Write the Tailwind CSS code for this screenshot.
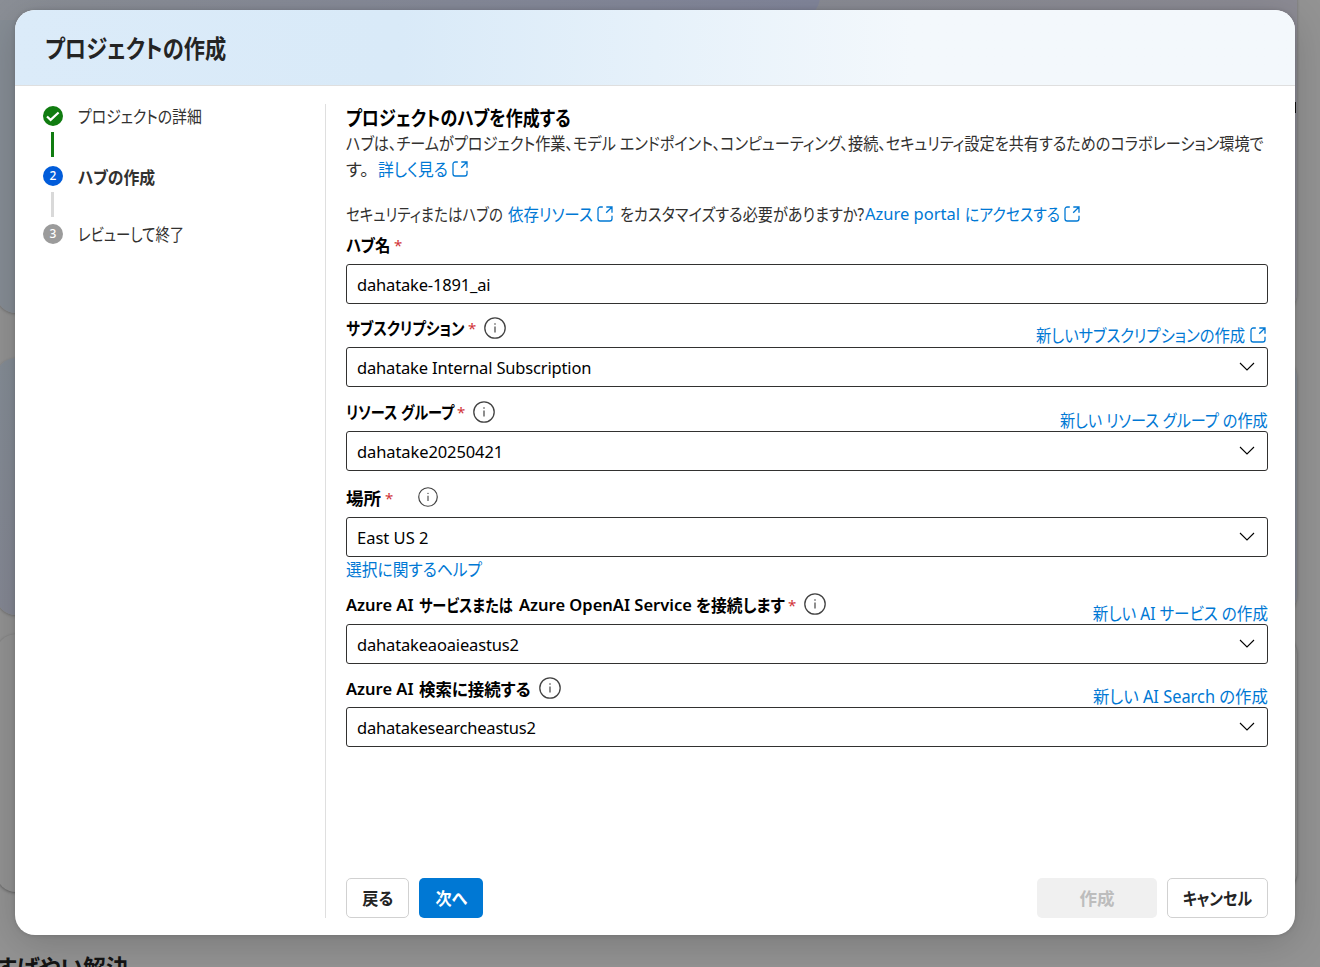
<!DOCTYPE html>
<html lang="ja">
<head>
  <meta charset="UTF-8">
  <title>プロジェクトの作成</title>
  <script src="https://cdn.jsdelivr.net/npm/@tailwindcss/browser@4"></script>
</head>
<body class="relative h-[967px] overflow-hidden bg-[#939393] font-['Noto_Sans','Noto_Sans_CJK_JP',sans-serif] [font-feature-settings:'palt'] text-[17.5px] leading-6 text-[#323130] whitespace-nowrap">
  <svg class="hidden">
    <symbol id="open" viewBox="0 0 16 16" fill="none" stroke="currentColor" stroke-width="1.3">
      <path d="M5.8 1H3.2A2.2 2.2 0 0 0 1 3.2v9.6A2.2 2.2 0 0 0 3.2 15h9.6a2.2 2.2 0 0 0 2.2-2.2v-3M9.3 1H15v5.7M15 1 9.2 6.8"/>
    </symbol>
    <symbol id="info" viewBox="0 0 22 22" fill="none" stroke="currentColor">
      <circle cx="11" cy="11" r="10.2" stroke-width="1.3"/>
      <path d="M11 9.5v6" stroke-width="1.2"/>
      <circle cx="11" cy="7" r=".8" fill="currentColor" stroke="none"/>
    </symbol>
    <symbol id="down" viewBox="0 0 16 9" fill="none" stroke="currentColor" stroke-width="1.1">
      <path d="m1 1 7 7 7-7"/>
    </symbol>
  </svg>

  <!-- página de fondo -->
  <div class="absolute -left-1 -top-5 flex w-[1301px] flex-col">
    <div class="h-[333px] overflow-hidden rounded-[20px] bg-gradient-to-r from-[#868d95] to-[#8c8b94] shadow-[0_1px_3px_rgba(0,0,0,.25)]">
      <div class="h-10 w-[824px] rounded-br-[24px] bg-gradient-to-r from-[#8b8f96] to-[#82869b]"></div>
    </div>
    <div class="mt-[45px] h-[257px] rounded-[20px] bg-gradient-to-b from-[#858d96] to-[#858894] shadow-[0_1px_3px_rgba(0,0,0,.25)]"></div>
    <div class="mt-[19px] h-[258px] rounded-[20px] bg-[#939393] shadow-[0_1px_3px_rgba(0,0,0,.35)]"></div>
    <p class="mt-[60px] text-[24px] font-bold leading-8 text-[#141414]"><span class="inline-block origin-left scale-x-[.95]">すばやい解決</span></p>
  </div>
  <div class="absolute left-[1294px] top-[102px] h-[11px] w-[2px] bg-[#111]"></div>

  <div class="absolute left-[15px] top-[10px] flex h-[925px] w-[1280px] flex-col overflow-hidden rounded-[20px] bg-white shadow-[0_8px_40px_rgba(0,0,0,.18),0_0_4px_rgba(0,0,0,.15)]">
    <header class="flex h-[76px] shrink-0 items-center border-b border-[#dfdfdf] bg-gradient-to-r from-[#dbebf9] via-[#d9eaf8] via-30% to-[#f3f8fc] to-70% pl-[30px]">
      <h1 class="text-[25px] font-bold leading-8 text-[#242424]"><span class="inline-block origin-left scale-x-[.85]">プロジェクトの作成</span></h1>
    </header>

    <div class="flex flex-1 pt-[18px] pb-[17px]">
      <!-- pasos -->
      <nav class="flex w-[311px] flex-col border-r border-[#dfdfdf] pl-7">
        <div class="flex h-[24px] items-center gap-[15px]">
          <svg class="size-5" viewBox="0 0 20 20"><circle cx="10" cy="10" r="10" fill="#107c10"/><path d="m4 10.5 3.6 3.4 8-7.4" fill="none" stroke="#fff" stroke-width="2.2"/></svg>
          <span class="origin-left scale-x-[.85]">プロジェクトの詳細</span>
        </div>
        <div class="ml-2 mt-1 h-[25px] w-[3px] bg-[#107c10]"></div>
        <div class="mt-[7px] flex h-6 items-center gap-[15px]">
          <span class="flex size-5 items-center justify-center rounded-full bg-[#015cda] text-xs font-medium text-white">2</span>
          <span class="mt-px origin-left scale-x-[.905] font-bold">ハブの作成</span>
        </div>
        <div class="ml-2 mt-1 h-[25px] w-[3px] bg-[#d9d9d9]"></div>
        <div class="mt-[5px] flex h-6 items-center gap-[15px]">
          <span class="flex size-5 items-center justify-center rounded-full bg-[#9b9b9b] text-xs font-medium text-white">3</span>
          <span class="origin-left scale-x-[.825]">レビューして終了</span>
        </div>
      </nav>

      <main class="flex w-[942px] flex-col pl-5">
        <h2 class="mt-[2px] h-[25px] text-[20px] font-bold leading-[25px] text-black"><span class="inline-block origin-left scale-x-[.852]">プロジェクトのハブを作成する</span></h2>
        <p class="h-[25px] w-[922px] leading-[25px]"><span class="inline-block origin-left scale-x-[.866]">ハブは、チームがプロジェクト作業、モデル エンドポイント、コンピューティング、接続、セキュリティ設定を共有するためのコラボレーション環境で</span></p>
        <p class="flex h-[25px] items-center">
          <span class="w-[32px]">す。</span>
          <a class="flex items-center text-[#0078d4]"><span class="w-[74px]"><span class="inline-block origin-left scale-x-[.9]">詳しく見る</span></span><svg class="size-4"><use href="#open"/></svg></a>
        </p>
        <p class="mt-5 flex h-[25px] items-center">
          <span class="w-[162px]"><span class="inline-block origin-left scale-x-[.826]">セキュリティまたはハブの</span></span>
          <a class="flex items-center text-[#0078d4]"><span class="w-[89px]"><span class="inline-block origin-left scale-x-[.885]">依存リソース</span></span><svg class="size-4"><use href="#open"/></svg></a>
          <span class="ml-[7px] w-[245px]"><span class="inline-block origin-left scale-x-[.866]">をカスタマイズする必要がありますか?</span></span>
          <a class="flex items-center text-[#0078d4]"><span class="w-[100px] text-[16.5px]">Azure portal</span><span class="w-[99px]"><span class="inline-block origin-left scale-x-[.85]">にアクセスする</span></span><svg class="size-4"><use href="#open"/></svg></a>
        </p>

        <div class="mt-[7px] flex h-[31px] text-black">
          <label class="flex h-6 items-center font-bold"><span class="w-[48px]"><span class="inline-block origin-left scale-x-[.88]">ハブ名</span></span><span class="w-2 text-[15px] font-normal text-[#d13438]">*</span></label>
        </div>
        <div class="flex h-10 w-[922px] items-center rounded-[3px] border border-[#323130] px-[10px] pt-px text-[16.5px] tracking-[-.01em] text-black">dahatake-1891_ai</div>

        <div class="flex h-[43px] w-[922px] items-end justify-between">
          <label class="mb-[7px] flex h-6 items-center font-bold text-black"><span class="w-[122px]"><span class="inline-block origin-left scale-x-[.83]">サブスクリプション</span></span><span class="w-2 text-[15px] font-normal text-[#d13438]">*</span><svg class="ml-[8px] size-[22px] text-[#424242]"><use href="#info"/></svg></label>
          <a class="flex items-center text-[#0078d4]"><span class="inline-block origin-right scale-x-[.875]">新しいサブスクリプションの作成</span><svg class="ml-[5px] mr-[2px] size-4"><use href="#open"/></svg></a>
        </div>
        <div class="flex h-10 w-[922px] items-center justify-between rounded-[3px] border border-[#323130] pl-[10px] pr-3 text-[16.5px] tracking-[-.01em] text-black"><span class="mt-[2px]">dahatake Internal Subscription</span><svg class="mb-[2px] h-[9px] w-4"><use href="#down"/></svg></div>

        <div class="flex h-[44px] w-[922px] items-end justify-between">
          <label class="mb-[7px] flex h-6 items-center font-bold text-black"><span class="w-[111px]"><span class="inline-block origin-left scale-x-[.81]">リソース グループ</span></span><span class="w-2 text-[15px] font-normal text-[#d13438]">*</span><svg class="ml-[8px] size-[22px] text-[#424242]"><use href="#info"/></svg></label>
          <a class="-mb-px origin-right scale-x-[.867] text-[#0078d4]">新しい リソース グループ の作成</a>
        </div>
        <div class="flex h-10 w-[922px] items-center justify-between rounded-[3px] border border-[#323130] pl-[10px] pr-3 text-[16.5px] tracking-[-.006em] text-black"><span class="mt-[2px]">dahatake20250421</span><svg class="mb-[2px] h-[9px] w-4"><use href="#down"/></svg></div>

        <div class="flex h-[46px] w-[922px] items-end">
          <label class="mb-[7px] flex h-6 items-center font-bold text-black"><span class="w-[39px]">場所</span><span class="w-2 text-[15px] font-normal text-[#d13438]">*</span><svg class="mb-[3px] ml-[25px] size-5 text-[#424242]"><use href="#info"/></svg></label>
        </div>
        <div class="flex h-10 w-[922px] items-center justify-between rounded-[3px] border border-[#323130] pl-[10px] pr-3 text-[16.5px] text-black"><span class="mt-px">East US 2</span><svg class="mb-[2px] h-[9px] w-4"><use href="#down"/></svg></div>
        <a class="h-6 text-[#0078d4]"><span class="inline-block origin-left scale-x-[.9]">選択に関するヘルプ</span></a>

        <div class="flex h-[43px] w-[922px] items-end justify-between">
          <label class="mb-[7px] flex h-6 items-center font-bold text-black"><span class="w-[73px] text-[16.5px] font-semibold">Azure AI</span><span class="w-[100px]"><span class="inline-block origin-left scale-x-[.81]">サービスまたは</span></span><span class="w-[177px] text-[16.5px] font-semibold">Azure OpenAI Service</span><span class="w-[92px]"><span class="inline-block origin-left scale-x-[.9]">を接続します</span></span><span class="w-2 text-[15px] font-normal text-[#d13438]">*</span><svg class="mb-[2px] ml-[8px] size-[22px] text-[#424242]"><use href="#info"/></svg></label>
          <a class="-mb-px origin-right scale-x-[.889] text-[#0078d4]">新しい AI サービス の作成</a>
        </div>
        <div class="flex h-10 w-[922px] items-center justify-between rounded-[3px] border border-[#323130] pl-[10px] pr-3 text-[16.5px] tracking-[-.01em] text-black"><span class="mt-px">dahatakeaoaieastus2</span><svg class="mb-[2px] h-[9px] w-4"><use href="#down"/></svg></div>

        <div class="flex h-[43px] w-[922px] items-end justify-between">
          <label class="mb-[6px] flex h-6 items-center font-bold text-black"><span class="w-[73px] text-[16.5px] font-semibold">Azure AI</span><span class="w-[120px]"><span class="inline-block origin-left scale-x-[.94]">検索に接続する</span></span><svg class="mb-[2px] size-[22px] text-[#424242]"><use href="#info"/></svg></label>
          <a class="-mb-px origin-right scale-x-[.936] text-[#0078d4]">新しい AI Search の作成</a>
        </div>
        <div class="flex h-10 w-[922px] items-center justify-between rounded-[3px] border border-[#323130] pl-[10px] pr-3 text-[16.5px] tracking-[-.013em] text-black"><span class="mt-[2px]">dahatakesearcheastus2</span><svg class="mb-[2px] h-[9px] w-4"><use href="#down"/></svg></div>

        <div class="mt-auto flex w-[922px] gap-[10px] font-bold text-[#242424]">
          <button class="flex h-10 w-[63px] items-center justify-center rounded-[5px] border border-[#d1d1d1]"><span class="scale-x-[.92]">戻る</span></button>
          <button class="flex h-10 w-16 items-center justify-center rounded-[5px] bg-[#0078d4] text-white"><span class="scale-x-[.92]">次へ</span></button>
          <button class="ml-auto flex h-10 w-[120px] items-center justify-center rounded-[5px] bg-[#f0f0f0] text-[#bdbdbd]">作成</button>
          <button class="flex h-10 w-[101px] items-center justify-center rounded-[5px] border border-[#d1d1d1]"><span class="scale-x-[.86]">キャンセル</span></button>
        </div>
      </main>
    </div>
  </div>
</body>
</html>
